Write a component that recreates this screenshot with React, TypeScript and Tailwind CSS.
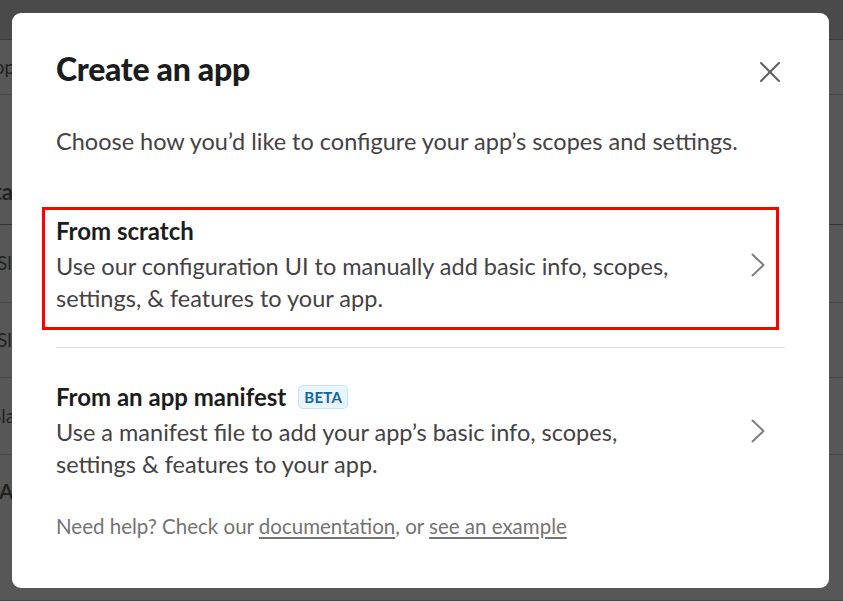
const bgRows = [
  { h: 'h-[55px]', text: 'Shop', cls: 'items-center -ml-[27px] text-[19px]' },
  { h: 'h-[130px]', text: 'Data', cls: 'items-end pb-[16px] -ml-[34px] text-[22px] font-bold' },
  { h: 'h-[78px]', text: 'Slack', cls: 'items-center -ml-[3px] text-[19px]' },
  { h: 'h-[75px]', text: 'Slack', cls: 'items-center -ml-[3px] text-[19px]' },
  { h: 'h-[77px]', text: 'Slack', cls: 'items-center -ml-[9px] text-[19px]' },
  { h: 'h-[146px]', text: 'All', cls: 'items-start pt-[20px] -ml-[1px] text-[21px] font-bold' },
];

function Backdrop() {
  return (
    <div className="flex flex-col">
      <div className="h-[40px] bg-[#4a4a4a] border-b border-[#3d3d3d]" />
      {bgRows.map((row, i) => (
        <div
          key={i}
          className={`${row.h} flex border-b ${i === 1 ? 'border-[#333333]' : 'border-[#474747]'} bg-[#575757] text-[#222222]`}
        >
          <span className={`flex ${row.cls}`}>{row.text}</span>
        </div>
      ))}
    </div>
  );
}

function Chevron() {
  return (
    <svg width="14" height="24" viewBox="0 0 14 24" fill="none" className="shrink-0">
      <polyline
        points="1.5,1.5 12.5,12 1.5,22.5"
        stroke="#807f82"
        strokeWidth="2"
        strokeLinecap="round"
        strokeLinejoin="round"
      />
    </svg>
  );
}

interface OptionProps {
  title: string;
  badge?: string;
  lines: string[];
  chevronGap: string;
}

function OptionRow({ title, badge, lines, chevronGap }: OptionProps) {
  return (
    <div className="flex items-center justify-between">
      <div>
        <div className="flex items-center gap-[12px]">
          <h3 className="text-[24px] font-bold text-[#1d1c1d] leading-[30px]">{title}</h3>
          {badge && (
            <span className="rounded-[5px] bg-[#e8f5fa] border border-[#c6e2f3] px-[5px] text-[15px] font-bold text-[#1264a3] leading-[22px] tracking-[0.3px]">
              {badge}
            </span>
          )}
        </div>
        <div className="mt-[4px]">
          {lines.map((l) => (
            <p key={l} className="text-[23.5px] text-[#454245] leading-[32px]">
              {l}
            </p>
          ))}
        </div>
      </div>
      <div className={chevronGap}>
        <Chevron />
      </div>
    </div>
  );
}

export default function App() {
  return (
    <div
      className="relative w-[843px] h-[601px] overflow-hidden bg-[#4a4a4a]"
      style={{ fontFamily: 'Lato, "Noto Sans", sans-serif' }}
    >
      <Backdrop />

      <div className="absolute left-[12px] top-[13px] w-[817px] h-[575px] rounded-[9px] bg-white px-[44px] pt-[36px]">
        <div className="flex items-start justify-between">
          <h2 className="text-[32px] font-black text-[#1d1c1d] tracking-[-0.3px] leading-[40px]">
            Create an app
          </h2>
          <button className="mt-[13px] mr-[5px]">
            <svg width="20" height="20" viewBox="0 0 20 20" fill="none">
              <path d="M1 1L19 19M19 1L1 19" stroke="#616061" strokeWidth="2" strokeLinecap="round" />
            </svg>
          </button>
        </div>

        <p className="mt-[37px] text-[23.5px] text-[#454245] leading-[30px]">
          Choose how you’d like to configure your app’s scopes and settings.
        </p>

        <div className="mt-[51px] ml-[-14px] mr-[6px] border-[3px] border-[#ff0000] pl-[11px] pt-[6px] pb-[13px]">
          <OptionRow
            title="From scratch"
            chevronGap="mr-[11px]"
            lines={[
              'Use our configuration UI to manually add basic info, scopes,',
              'settings, & features to your app.',
            ]}
          />
        </div>

        <div className="mt-[17px] border-t border-[#dddddd] pt-[34px]">
          <OptionRow
            title="From an app manifest"
            badge="BETA"
            chevronGap="mr-[20px]"
            lines={[
              'Use a manifest file to add your app’s basic info, scopes,',
              'settings & features to your app.',
            ]}
          />
        </div>

        <p className="mt-[32px] text-[20.5px] text-[#737373] leading-[28px]">
          Need help? Check our{' '}
          <a className="underline underline-offset-[3px]">documentation</a>, or{' '}
          <a className="underline underline-offset-[3px]">see an example</a>
        </p>
      </div>
    </div>
  );
}
